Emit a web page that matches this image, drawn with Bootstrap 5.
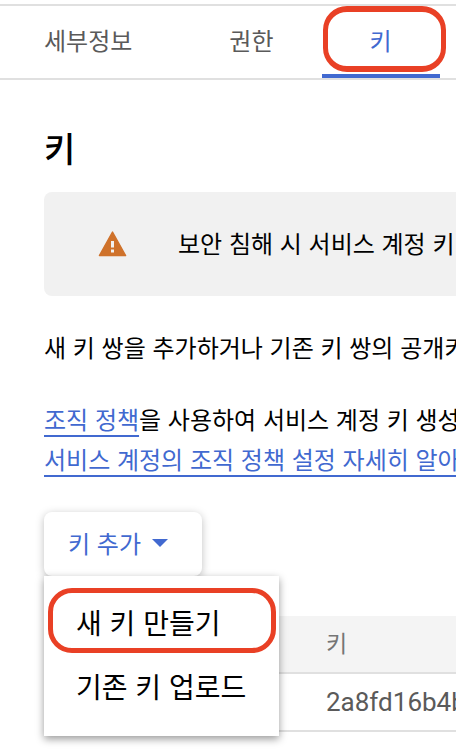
<!DOCTYPE html>
<html lang="ko">
<head>
<meta charset="utf-8">
<meta name="viewport" content="width=device-width, initial-scale=1">
<title>키</title>
<link rel="stylesheet" href="https://cdn.jsdelivr.net/npm/bootstrap@5.3.0/dist/css/bootstrap.min.css">
<style>
body { font-family: "Noto Sans CJK KR", Roboto, sans-serif; font-size: 24px; line-height: 40px; color: #000; overflow: hidden; }
.tabs { margin-top: 4px; border-top: 2px solid #e0e0e0; border-bottom: 2px solid #e0e0e0; }
.tabs .nav-link { position: relative; height: 72px; padding: 14px 48px 0 48px; color: #5a5a5a; line-height: 40px; border-radius: 0; }
.tabs .nav-link:first-child { padding-left: 44px; padding-right: 49px; }
.tabs .nav-link.active { color: #4169d0; border-bottom: 4px solid #4169d0; }
.ring::after { content: ""; position: absolute; border: 5px solid #e94025; border-radius: 24px; pointer-events: none; }
.tabs .ring::after { inset: 0 -6px 2px 1px; border-width: 6px 5px; }
.page-body { padding-left: 44px; padding-bottom: 20px; }
.page-title { font-size: 34px; font-weight: 500; line-height: 48px; margin: 44px 0 20px; }
.notice { background: #f1f1f1; border-radius: 8px 0 0 8px; height: 104px; padding-left: 54px; gap: 51px; }
.notice span { padding-bottom: 2px; }
.policy-link { color: #4169d0; text-decoration: underline; text-decoration-thickness: 2px; text-underline-offset: 6px; text-decoration-skip-ink: none; }
.intro { margin: 31px 0 32px; }
.policy { margin: 0 0 33px; }
.add-key { font-size: 24px; line-height: 40px; color: #4169d0; background: #fff; border: 0; border-radius: 8px; padding: 11px 33px 13px 24px; gap: 10px; box-shadow: 0 2px 8px rgba(0,0,0,.25); }
.add-key:hover { color: #4169d0; background: #fff; }
.add-menu { top: 100%; left: 0; width: 235px; padding: 14px 0 18px; border: 0; border-radius: 0; box-shadow: 0 3px 8px rgba(0,0,0,.4); }
.add-menu .dropdown-item { position: relative; font-size: 28px; line-height: 40px; padding: 12px 32px; color: #000; background: #fff; }
.add-menu .ring::after { inset: -2px 3px 1px 4px; }
.keys { margin-top: 40px; color: #5a5a5a; table-layout: fixed; border-collapse: separate; border-spacing: 0; width: 100%; }
.keys th, .keys td { height: 58px; padding: 0; border-bottom: 2px solid #e0e0e0; line-height: 40px; }
.keys th { background: #f4f4f4; font-size: 23px; font-weight: 400; color: #757575; padding-bottom: 4px; }
.keys td { font-family: Roboto, sans-serif; font-size: 26px; }
.col-type { width: 282px; }
</style>
</head>
<body>
<nav class="tabs nav flex-nowrap text-nowrap" aria-label="서비스 계정">
  <a class="nav-link" href="#details">세부정보</a>
  <a class="nav-link" href="#permissions">권한</a>
  <a class="nav-link active ring" href="#keys" aria-current="page">키</a>
</nav>
<main class="page-body text-nowrap overflow-hidden" id="keys">
  <h1 class="page-title">키</h1>
  <div class="notice d-flex align-items-center">
    <svg class="flex-shrink-0" width="29" height="26" viewBox="0 0 29 26" aria-hidden="true">
      <path d="M14.500 1 27.600 24.600H1.400Z" fill="#cf722b" stroke="#cf722b" stroke-width="1.400" stroke-linejoin="round"/>
      <path d="M13 10h3v6.500h-3zM13 18.500h3v3h-3z" fill="#f1f1f1"/>
    </svg>
    <span>보안 침해 시 서비스 계정 키</span>
  </div>
  <p class="intro">새 키 쌍을 추가하거나 기존 키 쌍의 공개키</p>
  <p class="policy"><a class="policy-link" href="#policy">조직 정책</a>을 사용하여 서비스 계정 키 생성<br><a class="policy-link" href="#learn">서비스 계정의 조직 정책 설정 자세히 알아</a></p>
  <div class="dropdown d-inline-block align-top">
    <button class="btn add-key d-flex align-items-center" type="button" aria-expanded="true">키 추가
      <svg width="18" height="8" viewBox="0 0 18 8" aria-hidden="true"><path d="M1 0h16L9 8Z" fill="#4169d0"/></svg>
    </button>
    <ul class="dropdown-menu add-menu show">
      <li><button class="dropdown-item ring" type="button">새 키 만들기</button></li>
      <li><button class="dropdown-item" type="button">기존 키 업로드</button></li>
    </ul>
  </div>
  <table class="keys">
    <colgroup><col class="col-type"><col></colgroup>
    <thead><tr><th></th><th scope="col">키</th></tr></thead>
    <tbody><tr><td></td><td>2a8fd16b4b</td></tr></tbody>
  </table>
</main>
<script src="https://cdn.jsdelivr.net/npm/bootstrap@5.3.0/dist/js/bootstrap.bundle.min.js"></script>
</body>
</html>
